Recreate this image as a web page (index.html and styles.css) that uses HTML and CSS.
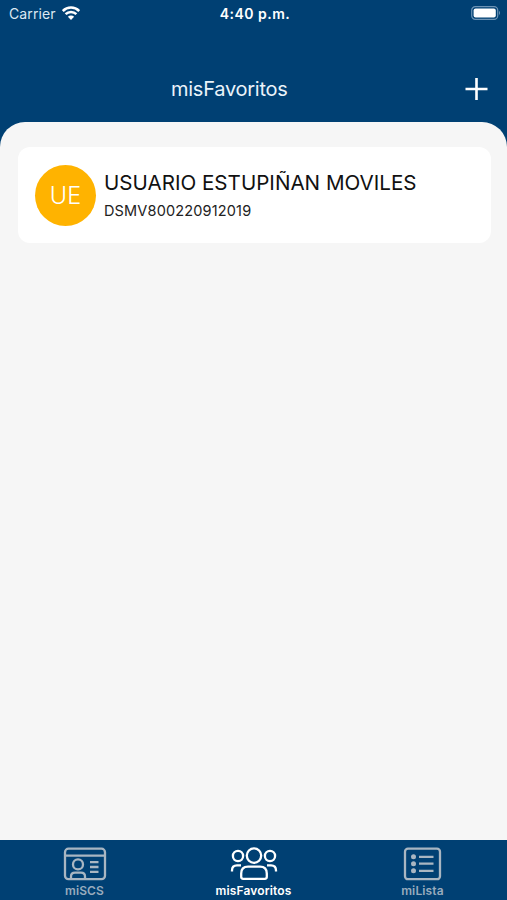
FILE: index.html
```
<!DOCTYPE html>
<html lang="es">
<head>
    <meta charset="UTF-8">
    <meta name="viewport" content="width=device-width, initial-scale=1.0">
    <title>misFavoritos</title>
    <link rel="stylesheet" href="styles.css">
</head>
<body>
    <div class="app">
        <!-- Barra de estado -->
        <div class="status-bar">
            <div class="status-left">
                <span class="carrier">Carrier</span>
                <svg class="wifi" width="18" height="14" viewBox="0 0 18 14">
                    <path d="M0.8 5 A11.6 11.6 0 0 1 17.2 5" />
                    <path d="M3.6 8.2 A7.6 7.6 0 0 1 14.4 8.2" />
                    <path class="wifi-dot" d="M5.9 10.8 A4.4 4.4 0 0 1 12.1 10.8 L9 14 Z" />
                </svg>
            </div>
            <span class="clock">4:40 p.m.</span>
            <div class="status-right">
                <svg width="30" height="14" viewBox="0 0 30 14">
                    <rect x="0.7" y="0.7" width="26" height="12.6" rx="3.6" fill="none" stroke="#6c93b5" stroke-width="1.2" />
                    <rect x="2.6" y="2.4" width="22.2" height="9.2" rx="2" fill="#fff" />
                    <path d="M28 4.8 Q30 7 28 9.2 Z" fill="#6c93b5" />
                </svg>
            </div>
        </div>

        <!-- Encabezado -->
        <header class="header">
            <h1>misFavoritos</h1>
            <button class="add-button" aria-label="Agregar">
                <svg width="24" height="24" viewBox="0 0 24 24">
                    <path d="M12.5 1 V23 M1.5 12 H23.5" />
                </svg>
            </button>
        </header>

        <!-- Lista de favoritos -->
        <main class="content">
            <div class="card">
                <div class="avatar">UE</div>
                <div class="card-info">
                    <div class="card-name">USUARIO ESTUPIÑAN MOVILES</div>
                    <div class="card-id">DSMV800220912019</div>
                </div>
            </div>
        </main>

        <!-- Menú inferior -->
        <nav class="tab-bar">
            <a class="tab">
                <svg width="44" height="34" viewBox="0 0 44 34">
                    <rect x="2" y="1.7" width="40" height="30.5" rx="3.5" />
                    <path d="M2 8.6 H42" />
                    <circle cx="15" cy="17.4" r="5" />
                    <path d="M8 32 V29.5 Q8 25.6 12 25.6 H18 Q22 25.6 22 29.5 V32" />
                    <path d="M27 15.2 H35.5 M27 20 H35.5 M27 24.8 H35.5" />
                </svg>
                <span>miSCS</span>
            </a>
            <a class="tab active">
                <svg width="48" height="34" viewBox="0 0 48 34">
                    <circle cx="24" cy="8.6" r="7.2" />
                    <circle cx="8" cy="9" r="5.1" />
                    <circle cx="40" cy="9" r="5.1" />
                    <path d="M11.2 29.8 V26.5 Q11.2 19.6 18 19.6 H30 Q36.8 19.6 36.8 26.5 V29.8 Q36.8 31.8 34.8 31.8 H13.2 Q11.2 31.8 11.2 29.8 Z" />
                    <path d="M2 24.5 V23.5 Q2 18.4 7 18.4 H11 M46 24.5 V23.5 Q46 18.4 41 18.4 H37" />
                </svg>
                <span>misFavoritos</span>
            </a>
            <a class="tab">
                <svg width="44" height="34" viewBox="0 0 44 34">
                    <rect x="4" y="1.7" width="35" height="30.5" rx="3" />
                    <path d="M18 9.8 H32.5 M18 16.7 H32.5 M18 23.8 H32.5" />
                    <g class="dots">
                        <circle cx="12.5" cy="9.8" r="2.5" />
                        <circle cx="12.5" cy="16.7" r="2.5" />
                        <circle cx="12.5" cy="23.8" r="2.5" />
                    </g>
                </svg>
                <span>miLista</span>
            </a>
        </nav>
    </div>
</body>
</html>
```
FILE: styles.css
```
* {
    box-sizing: border-box;
}
body {
    margin: 0;
    font-family: Inter, "Liberation Sans", sans-serif;
    background-color: #004073;
}
.app {
    display: flex;
    flex-direction: column;
    height: 900px;
}
.status-bar {
    display: grid;
    grid-template-columns: 1fr auto 1fr;
    align-items: center;
    height: 26px;
    padding: 0 6px 0 9px;
    color: #fff;
    font-size: 14px;
}
.status-left {
    display: flex;
    align-items: center;
    gap: 6px;
}
.carrier {
    color: #dce8f2;
    letter-spacing: 0.1px;
}
.wifi {
    fill: none;
    stroke: #fff;
    stroke-width: 2.5;
}
.wifi .wifi-dot {
    fill: #fff;
    stroke: none;
}
.clock {
    font-weight: 600;
    letter-spacing: 0.5px;
}
.status-right {
    display: flex;
    justify-content: flex-end;
}
.header {
    display: flex;
    align-items: center;
    justify-content: space-between;
    height: 96px;
    padding: 30px 19px 0 171px;
}
h1 {
    margin: 0;
    color: #eaf3fa;
    font-size: 20px;
    font-weight: 400;
    letter-spacing: -0.25px;
}
.add-button {
    display: flex;
    padding: 0;
    border: none;
    background: none;
}
.add-button svg {
    stroke: #fff;
    stroke-width: 2.6;
}
.content {
    flex: 1;
    padding: 25px 16px 0 18px;
    background-color: #f6f6f6;
    border-radius: 25px 25px 0 0;
}
.card {
    display: flex;
    align-items: center;
    gap: 8px;
    height: 96px;
    padding: 0 17px;
    background-color: #fff;
    border-radius: 12px;
}
.avatar {
    display: flex;
    align-items: center;
    justify-content: center;
    width: 61px;
    height: 61px;
    border-radius: 50%;
    background-color: #ffb300;
    color: #fff;
    font-size: 23.5px;
    font-weight: 300;
}
.card-name {
    color: #111;
    font-size: 20.6px;
    line-height: 28px;
}
.card-id {
    margin-top: 2px;
    padding-bottom: 1px;
    color: #222;
    font-size: 14.5px;
    letter-spacing: 0.16px;
    line-height: 24px;
}
.card-info {
    padding-top: 3px;
}
.tab-bar {
    display: flex;
    height: 60px;
    background-color: #004073;
}
.tab {
    display: flex;
    flex: 1;
    flex-direction: column;
    align-items: center;
    padding-top: 7px;
    color: #98abbd;
    font-size: 12px;
    font-weight: 600;
    letter-spacing: 0.15px;
    line-height: 20px;
}
.tab svg {
    flex-shrink: 0;
    fill: none;
    stroke: #a9b6c2;
    stroke-width: 2.3;
}
.tab .dots {
    fill: #a9b6c2;
    stroke: none;
}
.tab.active {
    color: #fff;
}
.tab.active svg {
    stroke: #fff;
}
```
